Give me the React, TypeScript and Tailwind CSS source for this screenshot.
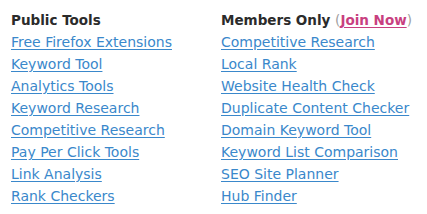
const publicTools = [
  'Free Firefox Extensions',
  'Keyword Tool',
  'Analytics Tools',
  'Keyword Research',
  'Competitive Research',
  'Pay Per Click Tools',
  'Link Analysis',
  'Rank Checkers',
];

const memberTools = [
  'Competitive Research',
  'Local Rank',
  'Website Health Check',
  'Duplicate Content Checker',
  'Domain Keyword Tool',
  'Keyword List Comparison',
  'SEO Site Planner',
  'Hub Finder',
];

function ToolList({ items }: { items: string[] }) {
  return (
    <ul>
      {items.map((item) => (
        <li key={item} className="h-[22px]">
          <a href="#" className="text-[#3a88cb] underline underline-offset-2">
            {item}
          </a>
        </li>
      ))}
    </ul>
  );
}

export default function App() {
  return (
    <div
      className="w-[427px] h-[214px] bg-white flex pl-[11px] pt-[9px] text-[14px] leading-[22px]"
      style={{ fontFamily: '"DejaVu Sans", Verdana, sans-serif' }}
    >
      <div className="w-[210px]">
        <h3 className="font-bold text-[#2b2b2b] h-[22px] text-[13.5px]">Public Tools</h3>
        <ToolList items={publicTools} />
      </div>
      <div>
        <h3 className="font-bold text-[#2b2b2b] h-[22px] text-[13.5px]">
          Members Only{' '}
          <span className="font-normal text-[#a0a0a0]">
            (
            <a href="#" className="text-[#c8407f] underline underline-offset-2 font-bold">
              Join Now
            </a>
            )
          </span>
        </h3>
        <ToolList items={memberTools} />
      </div>
    </div>
  );
}
